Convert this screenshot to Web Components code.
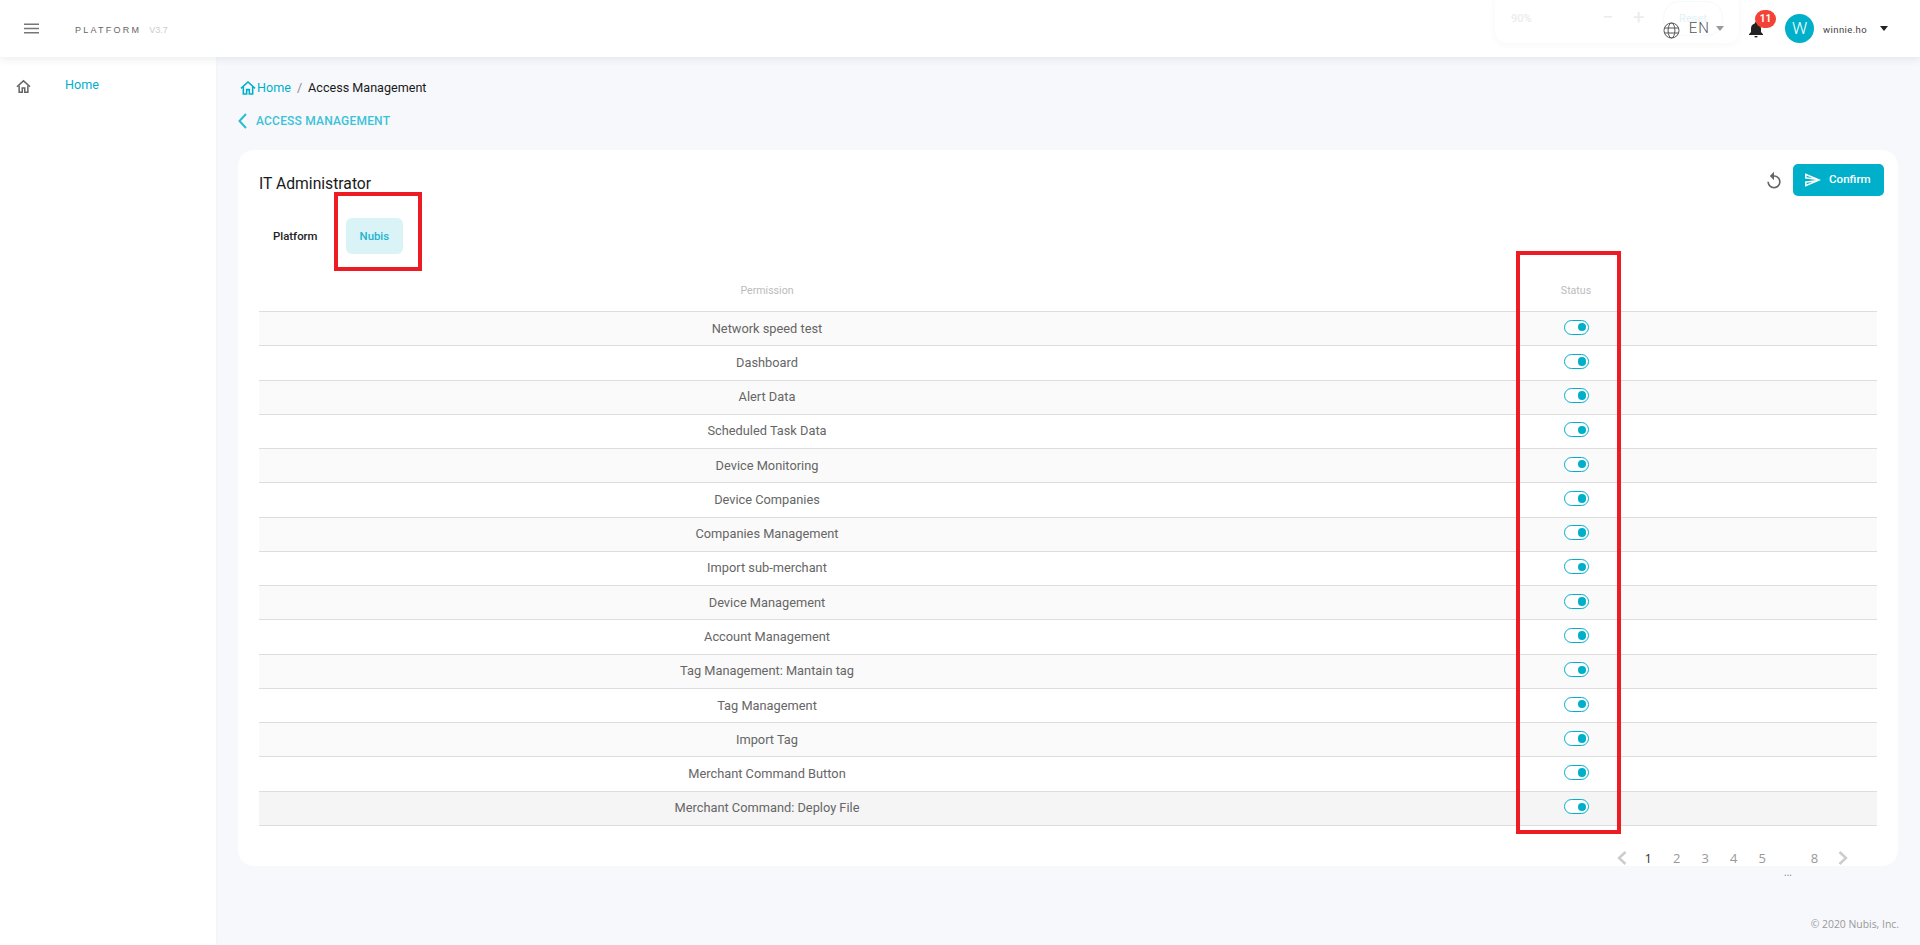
<!DOCTYPE html>
<html lang="en"><head><meta charset="utf-8"><title>Access Management</title>
<style>
html,body{margin:0;padding:0;height:100%;overflow:hidden}
body{font-family:Roboto,"Liberation Sans",sans-serif;background:#f7f8fc}
</style></head>
<body>
<app-shell>
  <app-header slot="header"></app-header>
  <app-sidebar slot="sidebar"></app-sidebar>
  <access-page></access-page>
</app-shell>
<script>
const TEAL='#00b0ca';
function def(name,html){
  customElements.define(name,class extends HTMLElement{
    constructor(){super();this.attachShadow({mode:'open'}).innerHTML=html;}
  });
}
const homeIcon=(c,s)=>`<svg width="${s}" height="${s}" viewBox="0 0 24 24" fill="none" stroke="${c}" stroke-width="2.4"><path d="M1.500 12.500 12 3l10.500 9.500"/><path d="M5 10.500V21h5v-6.500h4V21h5V10.500"/></svg>`;
const caret=(c)=>`<svg style="display:block" width="8" height="5" viewBox="0 0 8 5"><path d="M0 0h8L4 5z" fill="${c}"/></svg>`;

def('app-shell',`<style>
:host{display:grid;grid-template-columns:216px 1fr;grid-template-rows:57px 1fr;height:945px;width:1920px;background:#f7f8fc}
.h{grid-column:1/3;display:block;position:relative;z-index:2}
.m{min-width:0}
</style><div class="h"><slot name="header"></slot></div><slot name="sidebar"></slot><div class="m"><slot></slot></div>`);

def('app-header',`<style>
:host{display:flex;align-items:center;height:57px;background:#fff;box-shadow:0 2px 8px rgba(30,40,80,.09);position:relative;font-family:Roboto,"Liberation Sans",sans-serif}
.menu{margin-left:24px;width:15px;height:11px;display:block}
.brand{margin-left:36px;font-size:9px;letter-spacing:2.250px;color:#666;font-family:"Liberation Sans",sans-serif;position:relative;top:1px}
.ver{margin-left:8px;font-size:9px;color:#ccc;font-family:"Liberation Sans",sans-serif;position:relative;top:1px}
.sp{flex:1}
.ghost{position:absolute;left:1495px;top:-8px;width:244px;height:51px;border-radius:12px;background:#fff;box-shadow:0 1px 6px rgba(0,0,0,.06);opacity:.55;color:#ddd;font-size:11px;font-weight:500}
.ghost span{position:absolute;top:20px;line-height:13px}
.ghost .reset{left:168px;top:9px;width:60px;height:35px;border:1px solid #e9f6fa;border-radius:16px;box-sizing:border-box;text-align:center;line-height:33px;color:#d7eaf0}
.ghost .sym{font-size:20px;font-weight:400;top:19px}
.lang{display:flex;align-items:center;position:relative;color:#555;font-size:15px;letter-spacing:1px;font-weight:300}
.lang span.t{position:relative;top:-1px}
.lang svg.g{margin-right:9px;display:block;position:relative;top:2px}
.lang .c{margin-left:6px;display:block;margin-top:-1px}
.bell{margin-left:25px;position:relative;width:14px;height:16px;margin-top:3px}
.badge{position:absolute;left:6px;top:-12px;width:21px;height:18px;border-radius:9px;background:#f44336;color:#fff;font-size:10px;font-weight:700;line-height:18px;text-align:center}
.av{margin-left:22px;width:29px;height:29px;border-radius:50%;background:${TEAL};color:#fff;font-size:17px;font-weight:300;line-height:29px;text-align:center}
.user{margin-left:9px;font-size:9.500px;letter-spacing:.4px;color:#444;width:57px;position:relative;top:1px}
.cr{margin-right:32px;display:block}
</style>
<svg class="menu" viewBox="0 0 15 11"><path d="M0 1.200h15M0 5.500h15M0 9.800h15" stroke="#777" stroke-width="1.400"/></svg>
<span class="brand">PLATFORM</span><span class="ver">V3.7</span><span class="sp"></span>
<div class="ghost"><span style="left:16px">90%</span><span class="sym" style="left:107px">−</span><span class="sym" style="left:138px">+</span><span class="reset">Reset</span></div>
<div class="lang"><svg class="g" width="17" height="17" viewBox="0 0 17 17" fill="none" stroke="#555" stroke-width="1"><circle cx="8.500" cy="8.500" r="7.500"/><ellipse cx="8.500" cy="8.500" rx="3.400" ry="7.500"/><path d="M1.300 6h14.400M1.300 11h14.400"/></svg><span class="t">EN</span><span class="c">${caret('#999')}</span></div>
<div class="bell"><svg width="14" height="16" viewBox="0 0 14 16"><path d="M7 0a1.200 1.200 0 0 1 1.200 1.400C10.600 2 12 4 12 6.500V10l2 2.200V13H0v-.8L2 10V6.500C2 4 3.400 2 5.800 1.400A1.200 1.200 0 0 1 7 0zM5.400 14h3.200a1.600 1.600 0 0 1-3.200 0z" fill="#222"/></svg><span class="badge">11</span></div>
<div class="av">W</div><div class="user">winnie.ho</div><span class="cr">${caret('#222')}</span>`);

def('app-sidebar',`<style>
:host{display:block;background:#fff;height:100%;box-shadow:1px 0 3px rgba(30,40,80,.02)}
.item{display:flex;align-items:center;height:24px;margin-top:15px;color:${TEAL};font-size:12.600px;font-family:Roboto,sans-serif}
svg{margin-left:16px;margin-right:34px;display:block;position:relative;top:2px}
</style><div class="item">${homeIcon('#666',15)}Home</div>`);

def('bread-crumb',`<style>
:host{display:flex;align-items:center;font-size:12.600px;color:#1a1a1a;height:20px;font-family:Roboto,sans-serif}
svg{display:block;margin-left:2px;margin-right:1px;position:relative;top:1px}
.h{color:${TEAL}}.s{margin:0 6px;color:#888}
</style>${homeIcon(TEAL,16)}<span class="h">Home</span><span class="s">/</span><span>Access Management</span>`);

def('back-link',`<style>
:host{display:flex;align-items:center;height:18px;color:#3cc2d8;font-size:12px;font-weight:500;letter-spacing:.2px;font-family:Roboto,sans-serif}
svg{display:block;margin-right:9px}
</style><svg width="9" height="16" viewBox="0 0 9 16" fill="none" stroke="#2cbbd3" stroke-width="2"><path d="M8 1 1.500 8 8 15"/></svg><slot></slot>`);

def('tab-item',`<style>
:host{display:flex;align-items:center;justify-content:center;height:36px;border-radius:6px;font-size:11.400px;font-weight:500;color:#222;padding:0 14px;font-family:Roboto,sans-serif}
:host([active]){background:#d9f3f7;color:#1eb5cd}
</style><slot></slot>`);

def('toggle-switch',`<style>
:host{display:block;width:25px;height:15px;box-sizing:border-box;border:1px solid ${TEAL};border-radius:8px;background:#fff;position:relative}
i{position:absolute;right:1.500px;top:2.250px;width:8.500px;height:8.500px;border-radius:50%;background:${TEAL}}
</style><i></i>`);

def('perm-row',`<style>
:host{display:grid;grid-template-columns:1016px 1fr;height:34.270px;box-sizing:border-box;border-bottom:1px solid #ddd;align-items:center;font-size:12.800px;color:#666;font-family:Roboto,sans-serif}
:host(:nth-of-type(odd)){background:#fafafa}
:host([hover]){background:#f5f5f5}
.a{text-align:center;margin-top:-1px}.b{display:flex;justify-content:center;margin-top:-3px}
</style><div class="a"><slot></slot></div><div class="b"><toggle-switch></toggle-switch></div>`);

def('perm-table',`<style>
:host{display:block;font-family:Roboto,sans-serif}
.head{display:grid;grid-template-columns:1016px 1fr;height:46px;padding-top:3px;align-items:center;text-align:center;font-size:10.600px;color:#bbb;border-bottom:1px solid #ddd;box-sizing:border-box}
</style><div class="head"><div>Permission</div><div>Status</div></div><slot></slot>`);

def('page-nav',`<style>
:host{display:flex;align-items:center;height:18px;font-size:13px;color:#999;position:relative;font-family:"Open Sans",sans-serif}
span{display:block;text-align:center;width:28.500px}
.on{color:#333}
svg{display:block}
.more{position:absolute;left:163px;top:19px;width:16px;font-size:10px;line-height:8px;color:#888}
</style>
<svg style="margin-right:7px" width="10" height="14" viewBox="0 0 10 14" fill="none" stroke="#ccc" stroke-width="2.400"><path d="M8.500 1 2 7l6.500 6"/></svg>
<span class="on">1</span><span>2</span><span>3</span><span>4</span><span>5</span><span style="width:24px"></span><span style="width:28px">8</span>
<svg style="margin-left:9px" width="10" height="14" viewBox="0 0 10 14" fill="none" stroke="#ccc" stroke-width="2.400"><path d="M1.500 1 8 7l-6.500 6"/></svg>
<span class="more">...</span>`);

def('access-page',`<style>
:host{display:flex;flex-direction:column;height:888px;padding:0 22px;box-sizing:border-box;position:relative;font-family:Roboto,sans-serif}
bread-crumb{margin-top:20px}
back-link{margin-top:15px;margin-bottom:20px}
.card{background:#fff;border-radius:16px;height:716px;box-sizing:border-box;padding:0 21px;position:relative}
.top{display:flex;align-items:flex-start;height:68px}
h1{margin:24px 0 0;font-size:15.700px;line-height:20px;font-weight:400;color:#1a1a1a}
.sp{flex:1}
.undo{display:block;margin:21px 9px 0 0}
.btn{margin:14px -7px 0 0;display:flex;align-items:center;width:91px;height:32px;border-radius:5px;background:${TEAL};color:#fff;font-size:11.600px;font-weight:500;font-family:Roboto,sans-serif;box-sizing:border-box;padding-left:12px}
.btn svg{display:block;margin-right:8px}
.btn span{position:relative;top:-1px}
.tabs{display:flex;height:36px;margin-bottom:12px}
tab-item:first-child{margin-right:14px}
page-nav{margin:23px 0 0 1358px;width:240px}
.foot{position:absolute;right:21px;top:860px;font-size:10.400px;color:#999;font-family:"Open Sans",sans-serif}
.mark{position:absolute;border:4px solid #ed1c24;box-sizing:border-box;pointer-events:none}
.m1{left:118px;top:135px;width:88px;height:79px}
.m2{left:1300px;top:194px;width:105px;height:583px}
</style>
<bread-crumb></bread-crumb>
<back-link>ACCESS MANAGEMENT</back-link>
<div class="card">
  <div class="top"><h1>IT Administrator</h1><span class="sp"></span>
    <svg class="undo" width="20" height="20" viewBox="0 0 24 24"><path fill="#666" d="M12 5V1L7 6l5 5V7c3.310 0 6 2.690 6 6s-2.690 6-6 6-6-2.690-6-6H4c0 4.420 3.580 8 8 8s8-3.580 8-8-3.580-8-8-8z"/></svg>
    <div class="btn"><svg width="16" height="14" viewBox="2 3 21 18"><path fill="#fff" d="M4.010 6.030l7.510 3.220-7.520-1 .01-2.220m7.500 8.720L4 17.970v-2.220l7.510-1M2.010 3L2 10l15 2-15 2 .01 7L23 12 2.010 3z"/></svg><span>Confirm</span></div>
  </div>
  <div class="tabs"><tab-item>Platform</tab-item><tab-item active>Nubis</tab-item></div>
  <perm-table>
    <perm-row>Network speed test</perm-row><perm-row>Dashboard</perm-row><perm-row>Alert Data</perm-row><perm-row>Scheduled Task Data</perm-row><perm-row>Device Monitoring</perm-row><perm-row>Device Companies</perm-row><perm-row>Companies Management</perm-row><perm-row>Import sub-merchant</perm-row><perm-row>Device Management</perm-row><perm-row>Account Management</perm-row><perm-row>Tag Management: Mantain tag</perm-row><perm-row>Tag Management</perm-row><perm-row>Import Tag</perm-row><perm-row>Merchant Command Button</perm-row><perm-row hover>Merchant Command: Deploy File</perm-row>
  </perm-table>
  <page-nav></page-nav>
</div>
<div class="mark m1"></div><div class="mark m2"></div>
<div class="foot">© 2020 Nubis, Inc.</div>`);
</script>
</body></html>
